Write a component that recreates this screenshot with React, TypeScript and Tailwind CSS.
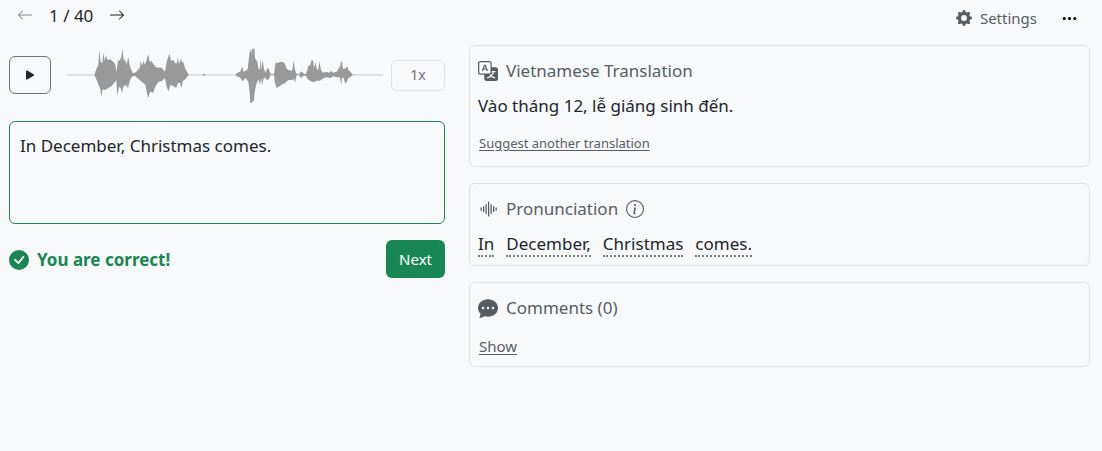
import { useState } from "react";
import type { ReactNode } from "react";
import {
  BsArrowLeft,
  BsArrowRight,
  BsChatDotsFill,
  BsCheckCircleFill,
  BsGearFill,
  BsInfoCircle,
  BsPlayFill,
  BsSoundwave,
  BsThreeDots,
  BsTranslate,
} from "react-icons/bs";

function Waveform() {
  return (
    <svg
      viewBox="201 141 948 168"
      className="h-14 w-full"
      preserveAspectRatio="none"
      role="img"
      aria-label="Audio waveform"
    >
      <path d="M201 224.500H1149" stroke="#d0d2d4" strokeWidth="4" />
      <circle cx="612" cy="224.500" r="3" fill="#999" />
      <path
        d="M283 224L290 205L295 195L298 150L302 185L307 190L310 158L314 182L318 165L322 180L330 178L338 184L345 192L350 215L354 182L360 180L364 172L367 146L371 178L378 185L380 195L385 170L390 200L398 219L405 218L412 212L420 202L422 182L426 197L431 182L434 195L439 182L445 163L449 185L454 183L460 192L468 202L485 203L495 215L500 185L508 161L513 182L520 180L525 190L531 190L533 172L537 192L543 176L547 190L549 182L555 205L566 224L556 238L548 244L544 266L540 248L535 248L528 264L520 258L512 254L505 274L500 260L495 235L485 243L475 246L465 262L460 278L450 275L445 294L440 276L436 254L430 250L425 245L415 236L405 228L398 228L390 240L384 264L378 254L370 260L366 280L362 264L357 260L352 288L349 240L345 246L335 258L325 264L315 270L308 268L304 290L301 266L296 256L290 240Z"
        fill="#999"
      />
      <path
        transform="translate(675 120)"
        d="M30 104L38 98L45 95L52 80L55 95L62 92L68 88L72 50L76 26L79 42L81 26L88 26L90 55L97 65L100 85L104 90L107 58L110 90L113 58L117 88L122 98L127 84L131 86L137 103H147L150 78L153 66L158 70L165 65L175 66L180 72L184 85L190 90L200 92L203 85L206 62L210 90L215 102L222 103L228 94L238 102H243L248 85L252 74L255 78L260 59L264 62L267 85L271 66L275 85L279 92L283 64L288 90L294 98L305 95L312 98L318 93L325 98L335 95L341 85L345 80L348 64L351 66L354 87L362 85L367 78L370 90L376 95L384 104L376 112L370 113L367 122L361 132L356 115L351 112L349 136L345 112H335L325 109L316 115L305 111L295 115L285 122H275L265 127L255 122L248 118L243 107H235L228 115L222 105H215L210 127L206 118L200 120H190L180 130L172 133L165 138L155 144L150 130L147 105H137L131 118L126 121L120 112L115 118L112 136L108 115L105 135L100 118L95 130L90 150L86 186L82 183L80 194L76 188L74 160L70 125L62 114L52 124L45 112L38 110Z"
        fill="#999"
      />
    </svg>
  );
}

function Panel({ icon, title, children }: { icon: ReactNode; title: ReactNode; children: ReactNode }) {
  return (
    <section className="rounded-md border border-[#dee2e6] px-2 pt-[13px] pb-2">
      <h2 className="flex items-center gap-2 leading-6 text-[#565e64]">
        {icon}
        {title}
      </h2>
      {children}
    </section>
  );
}

const words = ["In", "December,", "Christmas", "comes."];

export default function App() {
  const [answer, setAnswer] = useState("In December, Christmas comes.");

  return (
    <main className="min-h-screen bg-[#f8f9fb] pr-3 pl-[9px] font-['Noto_Sans',sans-serif] text-[17px] leading-6 text-[#212529]">
      <header className="flex h-[45px] items-start justify-between">
        <nav className="flex h-8 items-center gap-4 pl-2" aria-label="Exercises">
          <button aria-label="Previous exercise" className="pb-[2px] text-[#85898d]">
            <BsArrowLeft size={16} />
          </button>
          <span>1 / 40</span>
          <button aria-label="Next exercise" className="pb-[2px]">
            <BsArrowRight size={16} />
          </button>
        </nav>
        <div className="flex h-9 items-center gap-6 pr-3">
          <button className="flex items-center gap-2 text-[15px] text-[#565e64]">
            <BsGearFill size={16} />
            Settings
          </button>
          <button aria-label="More options" className="text-black">
            <BsThreeDots size={17} />
          </button>
        </div>
      </header>

      <div className="grid grid-cols-[436fr_621fr] items-start gap-6">
        <div className="pt-[2px]">
          <div className="flex items-center">
            <button
              aria-label="Play"
              className="flex h-[38px] w-[42px] shrink-0 items-center justify-center rounded-md border border-[#6c757d]"
            >
              <BsPlayFill size={16} />
            </button>
            <div className="min-w-0 flex-1 pr-2 pl-4">
              <Waveform />
            </div>
            <button className="h-[31px] w-[54px] shrink-0 rounded-md border border-[#dee2e6] text-sm text-[#6c6f72]">
              1x
            </button>
          </div>
          <textarea
            aria-label="Your answer"
            value={answer}
            onChange={(e) => setAnswer(e.target.value)}
            spellCheck={false}
            className="mt-[18px] block h-[103px] w-full resize-none rounded-md border border-[#198754] px-[10px] py-3 outline-none"
          />
          <div className="mt-4 flex items-center justify-between">
            <p className="flex items-center gap-2 pt-[2px] font-bold text-[#198754]">
              <BsCheckCircleFill size={20} />
              You are correct!
            </p>
            <button className="h-[38px] rounded-md bg-[#198754] px-[13px] text-[15px] text-white">Next</button>
          </div>
        </div>

        <div className="flex flex-col gap-4">
          <Panel icon={<BsTranslate size={20} />} title="Vietnamese Translation">
            <p className="mt-[11px]">Vào tháng 12, lễ giáng sinh đến.</p>
            <button className="mt-[13px] mb-[3px] block px-px text-[13px] text-[#565e64] underline underline-offset-2">
              Suggest another translation
            </button>
          </Panel>
          <Panel
            icon={<BsSoundwave size={20} />}
            title={
              <>
                Pronunciation
                <BsInfoCircle size={18} />
              </>
            }
          >
            <p className="mt-3 flex gap-3 leading-[22px]">
              {words.map((word) => (
                <span key={word} className="border-b-2 border-dotted border-[#7a7d80]">
                  {word}
                </span>
              ))}
            </p>
          </Panel>
          <Panel icon={<BsChatDotsFill size={20} />} title="Comments (0)">
            <button className="mt-[14px] block px-px text-[15px] text-[#565e64] underline underline-offset-2">
              Show
            </button>
          </Panel>
        </div>
      </div>
    </main>
  );
}
